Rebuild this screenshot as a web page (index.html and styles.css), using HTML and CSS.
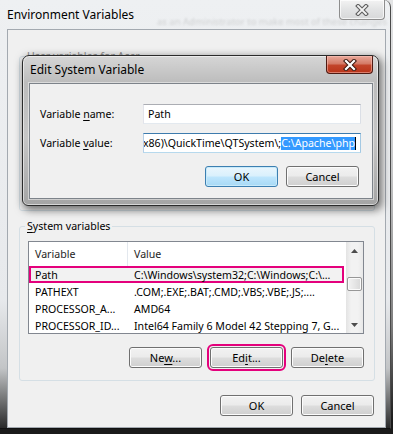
FILE: index.html
```html
<!DOCTYPE html>
<html lang="en">
  <head>
    <meta charset="UTF-8" />
    <title>Environment Variables</title>
    <link rel="stylesheet" href="styles.css">
  </head>
  <body>
    <div class="env">
      <div class="env-title">
        <span class="title">Environment Variables</span>
        <span class="behind">as an Administrator to make most of these changes</span>
        <div class="close">
          <svg width="14" height="12" viewBox="0 0 14 12">
            <path d="M3 2L11 10M11 2L3 10" stroke="#5f5f5f" stroke-width="4" stroke-linecap="square" />
            <path d="M3 2L11 10M11 2L3 10" stroke="#f4f4f4" stroke-width="1.8" stroke-linecap="square" />
          </svg>
        </div>
      </div>

      <div class="env-client">
        <fieldset class="group user-group">
          <legend><u>U</u>ser variables for Acer</legend>
        </fieldset>

        <fieldset class="group system-group">
          <legend><u>S</u>ystem variables</legend>
          <div class="list">
            <div class="list-body">
              <div class="list-row list-head">
                <div class="col-var">Variable</div>
                <div class="col-val">Value</div>
              </div>
              <div class="list-row selected">
                <div class="col-var">Path</div>
                <div class="col-val">C:\Windows\system32;C:\Windows;C:\...</div>
              </div>
              <div class="list-row">
                <div class="col-var">PATHEXT</div>
                <div class="col-val">.COM;.EXE;.BAT;.CMD;.VBS;.VBE;.JS;....</div>
              </div>
              <div class="list-row">
                <div class="col-var">PROCESSOR_A...</div>
                <div class="col-val">AMD64</div>
              </div>
              <div class="list-row">
                <div class="col-var">PROCESSOR_ID...</div>
                <div class="col-val">Intel64 Family 6 Model 42 Stepping 7, G...</div>
              </div>
            </div>
            <div class="scrollbar">
              <div class="sb-btn">
                <svg width="7" height="4" viewBox="0 0 7 4"><path d="M0 4L3.5 0L7 4Z" fill="#4d4d4d" /></svg>
              </div>
              <div class="sb-track">
                <div class="sb-thumb"></div>
              </div>
              <div class="sb-btn">
                <svg width="7" height="4" viewBox="0 0 7 4"><path d="M0 0L3.5 4L7 0Z" fill="#4d4d4d" /></svg>
              </div>
            </div>
          </div>
          <div class="actions">
            <button class="btn">Ne<u>w</u>...</button>
            <button class="btn marked">Ed<u>i</u>t...</button>
            <button class="btn">De<u>l</u>ete</button>
          </div>
        </fieldset>

        <div class="footer">
          <button class="btn">OK</button>
          <button class="btn">Cancel</button>
        </div>
      </div>
    </div>

    <div class="dialog">
      <div class="dlg-title">
        <span class="title">Edit System Variable</span>
        <div class="close red">
          <svg width="14" height="12" viewBox="0 0 14 12">
            <path d="M3 2L11 10M11 2L3 10" stroke="#3b1810" stroke-width="4.2" stroke-linecap="square" />
            <path d="M3 2L11 10M11 2L3 10" stroke="#ffffff" stroke-width="2.2" stroke-linecap="square" />
          </svg>
        </div>
      </div>
      <div class="dlg-client">
        <div class="fields">
          <label>Variable <u>n</u>ame:</label>
          <div class="edit">Path</div>
          <label>Variable <u>v</u>alue:</label>
          <div class="edit focused">
            <span class="scroll">x86)\QuickTime\QTSystem\;<span class="sel">C:\Apache\php</span><span class="caret"></span></span>
          </div>
        </div>
        <div class="dlg-buttons">
          <button class="btn default">OK</button>
          <button class="btn">Cancel</button>
        </div>
      </div>
    </div>
  </body>
</html>
```

FILE: styles.css
```css
* {
  box-sizing: border-box;
}

body {
  margin: 0;
  width: 393px;
  height: 434px;
  overflow: hidden;
  position: relative;
  font-family: "Noto Sans", "Open Sans", sans-serif;
  font-size: 10.6px;
  color: #000;
  background: linear-gradient(to bottom, #e4e5e6 0%, #c4c5c6 40%, #7d7d7d 75%, #1a1a1a 97%);
}

u {
  text-decoration-thickness: 1px;
  text-underline-offset: 2px;
}

/* outer window */

.env {
  width: 391px;
  height: 429px;
  border-right: 1px solid #4a4a4a;
  border-bottom: 1px solid #111;
  border-top-right-radius: 7px;
  background: linear-gradient(to bottom, #eef0f2 0%, #e7e9ec 70%, #c3c5c7 86%, #2a2a2a 100%);
}

.env-title {
  height: 29px;
  display: flex;
  align-items: flex-start;
  padding-left: 7px;
  position: relative;
}

.env-title .title {
  font-size: 12px;
  line-height: 30px;
}

.behind {
  position: absolute;
  left: 157px;
  top: 15px;
  font-size: 9.5px;
  color: rgba(80, 80, 80, 0.2);
  filter: blur(1.2px);
  white-space: nowrap;
}

.close {
  margin-left: auto;
  margin-right: 5px;
  width: 46px;
  height: 20px;
  border: 1px solid #8d8d8d;
  border-top: none;
  border-radius: 0 0 4px 4px;
  background: linear-gradient(to bottom, #f3f3f3, #e2e3e4 50%, #d7d8d9);
  box-shadow: inset 0 0 0 1px rgba(255, 255, 255, 0.7);
  display: flex;
  align-items: center;
  justify-content: center;
  position: relative;
}

.close.red {
  width: 47px;
  height: 18px;
  border-color: #4e1a12;
  background: linear-gradient(to bottom, #e9a99b 0%, #d47a66 45%, #c2442a 55%, #b93419 100%);
  box-shadow: inset 0 0 0 1px rgba(255, 200, 190, 0.5);
}

.env-client {
  margin-left: 7px;
  width: 379px;
  height: 399px;
  border: 1px solid #a3a9b0;
  background: #f0f0f0;
}

/* group boxes */

.group {
  border: 1px solid #d5dfe5;
  border-radius: 3px;
  margin: 0 10px 0 11px;
  min-width: 0;
}

.group legend {
  padding: 0 2px;
  margin-left: -3px;
  line-height: 14px;
}

.user-group {
  margin-top: 19px;
  height: 162px;
  padding: 0 8px;
}

.user-group legend {
  color: #8a8a8a;
}

.system-group {
  margin-top: 8px;
  padding: 8px 10px 12px 8px;
}

/* list view */

.list {
  display: flex;
  height: 93px;
  border: 1px solid #828790;
  background: #fff;
}

.list-body {
  flex: 1;
  overflow: hidden;
}

.list-row {
  display: flex;
  height: 17px;
  align-items: center;
  white-space: nowrap;
}

.list-head {
  height: 24px;
  align-items: stretch;
  color: #1e1e1e;
}

.list-head > div {
  display: flex;
  align-items: center;
}

.list-head .col-var {
  border-right: 1px solid #e3e8ee;
}

.col-var {
  width: 99px;
  padding-left: 6px;
  overflow: hidden;
}

.col-val {
  flex: 1;
  padding-left: 6px;
  overflow: hidden;
}

.list-row.selected {
  background: #f2f2f2;
  box-shadow: inset 0 0 0 2px #e4007c;
  margin-right: 2px;
}

.scrollbar {
  width: 17px;
  display: flex;
  flex-direction: column;
  background: linear-gradient(to right, #e3e3e3, #f2f2f2 30%, #f2f2f2 70%, #e8e8e8);
}

.sb-btn {
  height: 17px;
  display: flex;
  align-items: center;
  justify-content: center;
}

.sb-track {
  flex: 1;
  padding-top: 18px;
}

.sb-thumb {
  margin: 0 1px;
  height: 14px;
  border: 1px solid #979797;
  border-radius: 2px;
  background: linear-gradient(to right, #f3f3f3, #e6e6e6 50%, #d8d8d8);
  box-shadow: inset 0 0 0 1px #fbfbfb;
}

/* buttons */

.btn {
  width: 73px;
  height: 21px;
  padding: 0;
  font: inherit;
  font-size: 11px;
  color: #000;
  border: 1px solid #707070;
  border-radius: 3px;
  background: linear-gradient(to bottom, #f2f2f2 0%, #ebebeb 48%, #dddddd 52%, #cfcfcf 100%);
  box-shadow: inset 0 0 0 1px #fcfcfc;
}

.btn.default {
  border-color: #3c7fb1;
  background: linear-gradient(to bottom, #eaf6fd 0%, #d9f0fc 48%, #bee6fd 52%, #a7d9f5 100%);
  box-shadow: inset 0 0 0 1px #c8eafa;
}

.btn.marked {
  outline: 2px solid #e4007c;
  outline-offset: 1px;
}

.actions {
  display: flex;
  justify-content: flex-end;
  gap: 8px;
  margin-top: 13px;
}

.footer {
  display: flex;
  justify-content: flex-end;
  gap: 8px;
  margin: 14px 11px 0 0;
}

/* edit dialog on top */

.dialog {
  position: absolute;
  left: 22px;
  top: 55px;
  width: 357px;
  height: 151px;
  border: 1px solid #2b2b2b;
  border-radius: 7px 7px 6px 6px;
  background: linear-gradient(to bottom, #d6d6d6 0%, #bcbcbc 18%, #c6c6c6 55%, #a4a4a4 100%);
  box-shadow: inset 0 0 0 1px rgba(255, 255, 255, 0.55), 2px 3px 9px 1px rgba(0, 0, 0, 0.55);
}

.dlg-title {
  height: 27px;
  display: flex;
  align-items: flex-start;
  padding-left: 7px;
}

.dlg-title .title {
  font-size: 12px;
  line-height: 27px;
}

.dlg-client {
  margin: 0 5px 0 6px;
  height: 116px;
  border: 1px solid #7d838a;
  background: #f0f0f0;
  box-shadow: 0 0 0 1px rgba(255, 255, 255, 0.45);
  padding: 20px 11px 0 10px;
}

.fields {
  display: grid;
  grid-template-columns: 103px 218px;
  row-gap: 9px;
  align-items: center;
}

.edit {
  height: 20px;
  border: 1px solid;
  border-color: #abadb3 #dbdfe6 #e3e9ef #e2e3ea;
  background: #fff;
  padding: 0 4px;
  display: flex;
  align-items: center;
  overflow: hidden;
  white-space: nowrap;
}

.edit.focused {
  border-color: #3d7bad #a4c9e3 #b7d9ed #b5cfe7;
  justify-content: flex-end;
}

.scroll {
  display: flex;
  align-items: center;
  flex-shrink: 0;
}

.sel {
  background: #3399ff;
  color: #fff;
  line-height: 13px;
}

.caret {
  width: 1px;
  height: 13px;
  background: #000;
}

.dlg-buttons {
  display: flex;
  justify-content: flex-end;
  gap: 8px;
  margin: 13px 2px 0 0;
}
```
